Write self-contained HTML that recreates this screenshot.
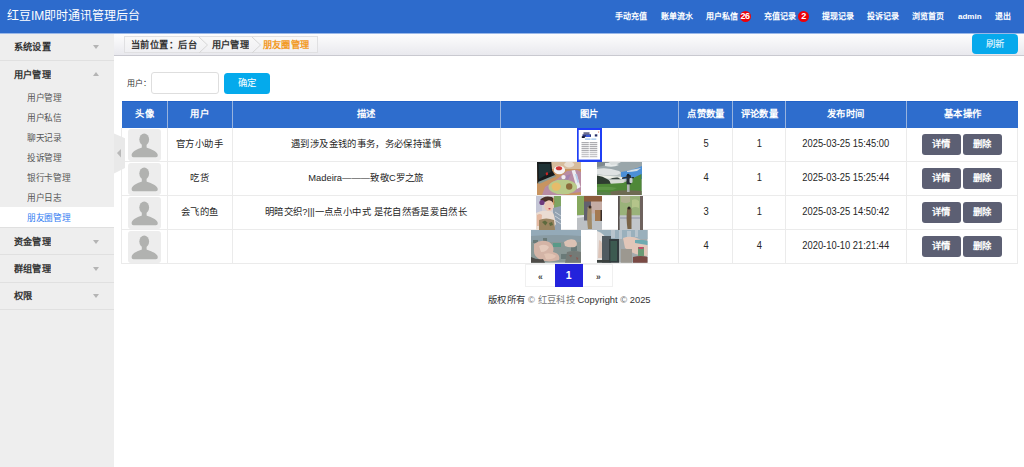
<!DOCTYPE html>
<html lang="zh-CN"><head><meta charset="utf-8">
<style>
*{margin:0;padding:0;box-sizing:border-box}
html,body{width:1024px;height:467px;overflow:hidden;background:#fff;font-family:"Liberation Sans",sans-serif;color:#333}
.a{position:absolute;white-space:nowrap}
#hdr{position:absolute;left:0;top:0;width:1024px;height:34px;background:linear-gradient(#2d6bcc 33px,#9ab8e8 33px)}
#title{left:7px;top:8.1px;font-size:12px;line-height:17px;color:#fff}
.nav{top:11px;font-size:8px;line-height:11px;color:#fff;font-weight:bold}
.badge{position:absolute;top:11px;height:11px;width:11px;border-radius:50%;background:#ee0008;color:#fff;font-size:9px;font-weight:bold;line-height:11.5px;text-align:center;letter-spacing:-0.5px}
#side{position:absolute;left:0;top:34px;width:114px;height:433px;background:#eeeeee}
.sh{position:absolute;left:0;width:114px;height:27px}
.sline{position:absolute;left:0;width:114px;height:1px;background:#e0e0e0}
.sh span{position:absolute;left:13.5px;top:0;line-height:27px;font-size:10px;font-weight:bold;color:#333;transform:scale(.92);transform-origin:0 50%}
.tri{position:absolute;left:92.8px;width:0;height:0;border-left:3.7px solid transparent;border-right:3.7px solid transparent}
.tri.dn{border-top:4.2px solid #b4b4b4;top:12px}
.tri.up{border-bottom:4.2px solid #b4b4b4;top:11.6px}
.si{position:absolute;left:0;width:114px;height:20px;line-height:21.4px;font-size:10px;color:#555}
.si span{position:absolute;left:26.5px;transform:scale(.87);transform-origin:0 50%}
.si.on{background:#fff;color:#2f7bf2;height:20px}
#crumbbar{position:absolute;left:114px;top:34px;width:910px;height:22px;background:linear-gradient(#fdfdfd,#e9e9ee);border-bottom:1px solid #c9c9d0}
#crumb{position:absolute;left:124px;top:36px;width:194px;height:16.5px;border:1px solid #e0e0e2;background:linear-gradient(#f8f8f8,#f0f0f3)}
.cr{top:37px;font-size:10px;line-height:15px;font-weight:bold;color:#333;transform:scale(.92);transform-origin:0 50%}
.chev{position:absolute;top:36.5px;width:10px;height:16px}
#refresh{position:absolute;left:972px;top:34px;width:45.5px;height:20px;border-radius:4px;background:#07a9ec;color:#fff;font-size:9.4px;line-height:19px;text-align:center}
#collapse{position:absolute;left:114px;top:133px;width:11px;height:41px;z-index:5}
.lbl{font-size:8px;color:#333}
#inp{position:absolute;left:151px;top:72px;width:68px;height:22px;border:1px solid #dedede;border-radius:3px;background:#fff}
#ok{position:absolute;left:224px;top:73px;width:46px;height:20.5px;border-radius:3.5px;background:#04aaec;color:#fff;font-size:9.4px;line-height:20px;text-align:center}
#th{position:absolute;left:122px;top:101px;width:895.5px;height:26.5px;background:#2e6dcd;border-top:1px solid #2262c8}
.hc{position:absolute;top:101px;height:26.5px;line-height:26px;color:#fff;font-weight:bold;font-size:10px;text-align:center;transform:scale(.936)}
.vs{position:absolute;top:101px;height:26.5px;width:1px;background:#98b3de}
.vl{position:absolute;top:127.5px;height:136px;width:1px;background:#ebebeb}
.hl{position:absolute;left:122px;width:896px;height:1px;background:#ebebeb}
.tc{position:absolute;height:34px;line-height:34px;font-size:10px;color:#262626;text-align:center;white-space:nowrap;transform:translateY(-0.5px) scale(.936)}
.num{transform:translateY(-1.1px) scale(.936,1.08)}
.av{position:absolute;left:127.5px;width:33px;height:32.5px;background:#ededed;border-radius:3px}
.av svg{position:absolute;left:0;top:0}
.btn{position:absolute;width:38.5px;height:20.5px;line-height:20.5px;border-radius:3px;background:#5c5f73;color:#fff;font-weight:bold;font-size:9.4px;text-align:center}
.img{position:absolute;overflow:hidden}
#pg{position:absolute;left:525px;top:264px;width:88px;height:23px;border:1px solid #f0f0f0}
#pgon{position:absolute;left:554.5px;top:264px;width:29px;height:23px;background:#2323dc;color:#fff;font-weight:bold;font-size:10.5px;line-height:23.5px;width:28.5px;text-align:center}
.pga{position:absolute;top:265.5px;line-height:23px;font-size:8.5px;font-weight:bold;color:#444}
#foot{left:488px;top:291.6px;font-size:10px;line-height:15px;color:#333;transform:scale(.936);transform-origin:0 50%}
</style></head><body>
<div id="hdr"></div>
<div id="title" class="a">红豆IM即时通讯管理后台</div>
<div class="a nav" style="left:615px">手动充值</div>
<div class="a nav" style="left:660.5px">账单流水</div>
<div class="a nav" style="left:706px">用户私信</div>
<div class="badge" style="left:739.5px">26</div>
<div class="a nav" style="left:764px">充值记录</div>
<div class="badge" style="left:798px">2</div>
<div class="a nav" style="left:821.5px">提现记录</div>
<div class="a nav" style="left:867px">投诉记录</div>
<div class="a nav" style="left:912px">浏览首页</div>
<div class="a nav" style="left:958px;font-size:8px;top:11.3px">admin</div>
<div class="a nav" style="left:994.5px">退出</div>

<!--SIDE-->
<div id="side"></div>
<div class="sh" style="top:33px"><span>系统设置</span><i class="tri dn"></i></div>
<div class="sline" style="top:60px"></div>
<div class="sh" style="top:60.7px"><span>用户管理</span><i class="tri up"></i></div>
<div class="si" style="top:87.3px"><span>用户管理</span></div>
<div class="si" style="top:107.3px"><span>用户私信</span></div>
<div class="si" style="top:127.3px"><span>聊天记录</span></div>
<div class="si" style="top:147.3px"><span>投诉管理</span></div>
<div class="si" style="top:167.3px"><span>银行卡管理</span></div>
<div class="si" style="top:187.3px"><span>用户日志</span></div>
<div class="si on" style="top:207.3px"><span>朋友圈管理</span></div>
<div class="sline" style="top:227px"></div>
<div class="sh" style="top:227.5px"><span>资金管理</span><i class="tri dn"></i></div>
<div class="sline" style="top:254px"></div>
<div class="sh" style="top:255px"><span>群组管理</span><i class="tri dn"></i></div>
<div class="sline" style="top:282px"></div>
<div class="sh" style="top:282.3px"><span>权限</span><i class="tri dn"></i></div>
<div class="sline" style="top:309px"></div>
<!--CRUMB-->
<div id="crumbbar"></div>
<div id="crumb"></div>
<div class="a cr" style="left:131px;letter-spacing:0.3px">当前位置：后台</div>
<svg class="chev" style="left:199px" width="10" height="16" viewBox="0 0 10 16"><path d="M0 0 L8.5 8 L0 16" fill="none" stroke="#d6d6d6" stroke-width="1"/></svg>
<div class="a cr" style="left:212px">用户管理</div>
<svg class="chev" style="left:252px" width="10" height="16" viewBox="0 0 10 16"><path d="M0 0 L8.5 8 L0 16" fill="none" stroke="#d6d6d6" stroke-width="1"/></svg>
<div class="a cr" style="left:263px;color:#f29a26">朋友圈管理</div>
<div id="refresh">刷新</div>

<svg id="collapse" width="11" height="41" viewBox="0 0 11 41"><path d="M0 0.5 L11 5.3 L11 35 L0 40.5 Z" fill="#e9e9e9"/><path d="M3 20 L7 16 L7 24.5 Z" fill="#b9b9b9"/></svg>

<!--SEARCH-->
<div class="a lbl" style="left:127px;top:78.2px;line-height:12px">用户：</div>
<div id="inp"></div>
<div id="ok">确定</div>

<!--TABLE-->
<div id="th"></div>
<div class="hc" style="left:122px;width:45px">头像</div>
<div class="hc" style="left:167px;width:65px">用户</div>
<div class="hc" style="left:232px;width:268px">描述</div>
<div class="hc" style="left:500px;width:178.5px">图片</div>
<div class="hc" style="left:678.5px;width:54px">点赞数量</div>
<div class="hc" style="left:732.5px;width:52.5px">评论数量</div>
<div class="hc" style="left:785px;width:121.5px">发布时间</div>
<div class="hc" style="left:906.5px;width:111px">基本操作</div>
<div class="vs" style="left:167px"></div>
<div class="vs" style="left:232px"></div>
<div class="vs" style="left:500px"></div>
<div class="vs" style="left:678px"></div>
<div class="vs" style="left:732px"></div>
<div class="vs" style="left:785px"></div>
<div class="vs" style="left:906px"></div>

<div class="vl" style="left:121px"></div>
<div class="vl" style="left:167px"></div>
<div class="vl" style="left:232px"></div>
<div class="vl" style="left:500px"></div>
<div class="vl" style="left:678px"></div>
<div class="vl" style="left:732px"></div>
<div class="vl" style="left:785px"></div>
<div class="vl" style="left:906px"></div>
<div class="vl" style="left:1017px"></div>
<div class="hl" style="top:161px"></div>
<div class="hl" style="top:195px"></div>
<div class="hl" style="top:229px"></div>
<div class="hl" style="top:263px"></div>

<!--ROWS-->
<!--R1-->
<div class="av" style="top:128.5px"><svg width="33" height="33" viewBox="0 0 33 33"><ellipse cx="16.2" cy="10.5" rx="4.9" ry="6" fill="#b1b2b0"/><path d="M13.8 14 H18.6 V19 H13.8z" fill="#b1b2b0"/><path d="M3.6 26.3 C3.6 22.8 8 20.6 12 19.2 Q14.2 18.3 16.2 18.3 Q18.2 18.3 20.4 19.2 C24.4 20.6 29.8 22.8 29.8 26.3 Q29.8 28.2 28 28.2 H5.4 Q3.6 28.2 3.6 26.3Z" fill="#b1b2b0"/></svg></div>
<div class="tc" style="left:167px;width:65px;top:127.5px">官方小助手</div>
<div class="tc" style="left:232px;width:268px;top:127.5px">遇到涉及金钱的事务，务必保持谨慎</div>
<div class="tc num" style="left:678.5px;width:54px;top:127.5px">5</div>
<div class="tc num" style="left:732.5px;width:52.5px;top:127.5px">1</div>
<div class="tc num" style="left:785px;width:121.5px;top:127.5px">2025-03-25 15:45:00</div>
<div class="btn" style="left:922px;top:134.2px">详情</div>
<div class="btn" style="left:963px;top:134.2px">删除</div>

<!--R2-->
<div class="av" style="top:162.5px"><svg width="33" height="33" viewBox="0 0 33 33"><ellipse cx="16.2" cy="10.5" rx="4.9" ry="6" fill="#b1b2b0"/><path d="M13.8 14 H18.6 V19 H13.8z" fill="#b1b2b0"/><path d="M3.6 26.3 C3.6 22.8 8 20.6 12 19.2 Q14.2 18.3 16.2 18.3 Q18.2 18.3 20.4 19.2 C24.4 20.6 29.8 22.8 29.8 26.3 Q29.8 28.2 28 28.2 H5.4 Q3.6 28.2 3.6 26.3Z" fill="#b1b2b0"/></svg></div>
<div class="tc" style="left:167px;width:65px;top:161.5px">吃货</div>
<div class="tc" style="left:232px;width:268px;top:161.5px">Madeira———致敬C罗之旅</div>
<div class="tc num" style="left:678.5px;width:54px;top:161.5px">4</div>
<div class="tc num" style="left:732.5px;width:52.5px;top:161.5px">1</div>
<div class="tc num" style="left:785px;width:121.5px;top:161.5px">2025-03-25 15:25:44</div>
<div class="btn" style="left:922px;top:168.2px">详情</div>
<div class="btn" style="left:963px;top:168.2px">删除</div>

<!--R3-->
<div class="av" style="top:196.5px"><svg width="33" height="33" viewBox="0 0 33 33"><ellipse cx="16.2" cy="10.5" rx="4.9" ry="6" fill="#b1b2b0"/><path d="M13.8 14 H18.6 V19 H13.8z" fill="#b1b2b0"/><path d="M3.6 26.3 C3.6 22.8 8 20.6 12 19.2 Q14.2 18.3 16.2 18.3 Q18.2 18.3 20.4 19.2 C24.4 20.6 29.8 22.8 29.8 26.3 Q29.8 28.2 28 28.2 H5.4 Q3.6 28.2 3.6 26.3Z" fill="#b1b2b0"/></svg></div>
<div class="tc" style="left:167px;width:65px;top:195.5px">会飞的鱼</div>
<div class="tc" style="left:232px;width:268px;top:195.5px">明暗交织?|||一点点小中式 是花自然香是爱自然长</div>
<div class="tc num" style="left:678.5px;width:54px;top:195.5px">3</div>
<div class="tc num" style="left:732.5px;width:52.5px;top:195.5px">1</div>
<div class="tc num" style="left:785px;width:121.5px;top:195.5px">2025-03-25 14:50:42</div>
<div class="btn" style="left:922px;top:202.2px">详情</div>
<div class="btn" style="left:963px;top:202.2px">删除</div>

<!--R4-->
<div class="av" style="top:230.5px"><svg width="33" height="33" viewBox="0 0 33 33"><ellipse cx="16.2" cy="10.5" rx="4.9" ry="6" fill="#b1b2b0"/><path d="M13.8 14 H18.6 V19 H13.8z" fill="#b1b2b0"/><path d="M3.6 26.3 C3.6 22.8 8 20.6 12 19.2 Q14.2 18.3 16.2 18.3 Q18.2 18.3 20.4 19.2 C24.4 20.6 29.8 22.8 29.8 26.3 Q29.8 28.2 28 28.2 H5.4 Q3.6 28.2 3.6 26.3Z" fill="#b1b2b0"/></svg></div>
<div class="tc num" style="left:678.5px;width:54px;top:229.5px">4</div>
<div class="tc num" style="left:732.5px;width:52.5px;top:229.5px">4</div>
<div class="tc num" style="left:785px;width:121.5px;top:229.5px">2020-10-10 21:21:44</div>
<div class="btn" style="left:922px;top:236.2px">详情</div>
<div class="btn" style="left:963px;top:236.2px">删除</div>

<!--IMAGES-->
<svg class="img" style="left:577px;top:127.8px" width="25" height="34" viewBox="0 0 25 34">
<rect x="0" y="0" width="25" height="34" fill="#1f3ff5"/>
<rect x="1.7" y="2" width="21.3" height="29.6" fill="#ffffff"/>
<path d="M6.5 4.2 h6 v2.2 h-6z" fill="#6a7090"/><path d="M5.5 6.3 h8.5 v2.6 h-8.5z" fill="#2a3580"/><path d="M4.8 8.2 h3 v1.8 h-3z" fill="#101830"/><path d="M9 7 h4 v2 h-4z" fill="#3a5ad8"/>
<path d="M17.8 6.3 h2.5 v2.2 h-2.5z" fill="#28306a"/><path d="M20.8 3.5 l1.6 0.2 l-0.8 1.4z" fill="#e07050"/>
<path d="M8 10.5 h5.5 v1.2 h-5.5z M14.3 10.5 h5 v1.2 h-5z" fill="#9cc4ee"/>
<g fill="#9a9a9e"><rect x="4.5" y="14.2" width="15.8" height="1"/><rect x="4.5" y="16.2" width="15.8" height="1"/><rect x="4.5" y="18.2" width="15.8" height="1"/><rect x="4.5" y="20.2" width="15.8" height="1"/><rect x="4.5" y="22.2" width="15.8" height="1"/><rect x="4.5" y="24.2" width="15.8" height="1" opacity=".7"/><rect x="4.5" y="26.2" width="15.8" height="1" opacity=".7"/><rect x="4.5" y="28.2" width="15.8" height="1" opacity=".7"/></g>
<rect x="11.8" y="13.5" width="0.8" height="16" fill="#ffffff"/>
</svg>
<svg class="img" style="left:537px;top:162px" width="44" height="33" viewBox="0 0 44 33">
<rect width="44" height="33" fill="#c89460"/>
<rect x="14" y="0" width="30" height="7" fill="#d6bc9c"/>
<path d="M5 33 L8 25 L20 17 L30 9 L40 8 L44 10 V30 L36 31 L24 33z" fill="#b88ca4"/>
<path d="M10 26 L22 18 L28 14 L34 12 L30 20 L18 28z" fill="#9a7cb0" opacity=".7"/>
<path d="M0 0 H14.3 L15.1 8.6 L18.4 13.5 L0.4 21.6 Z" fill="#161b1d"/>
<path d="M1.5 2 H13 L14 10 L2 17z" fill="#1f3336"/>
<path d="M8.6 11 L10.5 10 L11.2 12.6 L9.3 13.4z" fill="#d02424"/>
<path d="M1 20 L18 13 L19 14.5 L2 22z" fill="#8a9a94"/>
<ellipse cx="32.2" cy="2.5" rx="5" ry="3" fill="#e8ddd0"/>
<ellipse cx="22.4" cy="8" rx="5.7" ry="4.3" fill="#f4f2f2"/>
<ellipse cx="22" cy="6.3" rx="3.1" ry="2" fill="#d03838"/>
<path d="M34.6 8.6 L38 8 L43.6 25 L40 27z" fill="#ececf0"/>
<path d="M38 12 L40 12 L42 20 L40.5 21z" fill="#b8cce8"/>
<circle cx="26.5" cy="15.1" r="2.2" fill="#f2f0f2"/>
<ellipse cx="25.7" cy="24.9" rx="14.3" ry="7.4" fill="#b9ca8a"/>
<ellipse cx="19.2" cy="24.6" rx="4.6" ry="4.2" fill="#e6bc6a"/>
<circle cx="32.2" cy="24.5" r="3.2" fill="#8c6c3c"/>
</svg>
<svg class="img" style="left:597px;top:162px" width="45" height="33" viewBox="0 0 45 33">
<rect width="45" height="33" fill="#b8c0c0"/>
<path d="M0 0 H45 V9 Q30 12 18 10 Q8 8 0 10z" fill="#9aa6aa"/>
<path d="M0 0 H12 Q10 4 0 5z" fill="#808a8e"/><path d="M8 1 Q16 0 22 3 Q16 6 8 4z" fill="#e6eaea"/>
<path d="M12 0 H24 Q20 3 14 3z" fill="#d8dcdc"/>
<path d="M24 10 Q36 8 45 4 V17 H24z" fill="#4b8fd6"/>
<path d="M30 9 Q38 7 44 6 L40 9 Q34 10 30 10z" fill="#d4dde4"/>
<path d="M0 7 Q10 5 22 9 Q26 11 20 13 Q10 14 0 12z" fill="#dfe2e2"/>
<path d="M0 13 Q14 14 26 15 L26 17 Q12 17 0 16z" fill="#eceee6"/>
<path d="M0 13.5 Q6 14 10 17 L16 21 L16 23 H0z" fill="#2e3c30"/>
<path d="M12 17.5 Q16 15 21 15.5 L24 17.5z" fill="#3a4440"/>
<path d="M12 17.5 H28 L26 22.5 H14z" fill="#d8dcd6"/>
<path d="M0 22 Q14 22 26 21 L44.5 12 V33 H0z" fill="#4f8838"/>
<path d="M0 25 Q12 24 20 26 L16 28 H0z" fill="#5e9646"/>
<path d="M14 29.5 Q26 27.5 44.5 29 V33 H10z" fill="#6e6a52"/><path d="M0 30 Q8 29 14 31 V33 H0z" fill="#58804a"/>
<path d="M25 15.5 L30 14.5 L30 16 L25 17z" fill="#2a3038"/>
<rect x="29.5" y="13" width="4.5" height="9.5" rx="1" fill="#283038"/>
<circle cx="31.2" cy="13.2" r="1.4" fill="#1e2428"/>
<rect x="32.5" y="16" width="3" height="5" rx="1" fill="#c8ccd4"/>
<rect x="34.5" y="15" width="2.5" height="1.2" fill="#283038"/>
<rect x="30" y="22.5" width="2.6" height="7.5" fill="#b0b4b4"/>
</svg>
<svg class="img" style="left:536px;top:195.5px" width="25" height="34" viewBox="0 0 25 34">
<rect width="25" height="34" fill="#d6d0d4"/>
<rect x="0" y="0" width="6" height="34" fill="#c4c6d6"/>
<path d="M18 0 H25 V14 H18z" fill="#7ea462"/>
<path d="M17 12 L25 10 V34 H17z" fill="#93a2b0"/>
<path d="M19 16 L25 20 M19 20 L25 24 M19 24 L25 28" stroke="#c8d0d8" stroke-width="1"/>
<path d="M4 4 Q8 -1 16 1 Q19 3 18 8 L15 5 L7 6z" fill="#4a3028"/>
<path d="M17 1 Q19 4 18 9 L17 9z" fill="#c89058"/>
<circle cx="6" cy="6.5" r="2.6" fill="#6e3a7e"/>
<ellipse cx="13" cy="9.8" rx="4.6" ry="5.5" fill="#ecc8b4"/>
<ellipse cx="13.5" cy="12.8" rx="1.2" ry="0.7" fill="#c04050"/>
<path d="M0 17 Q6 14 12 15 Q17 15 18 19 L20 28 L16 34 H0z" fill="#eadcd2"/>
<path d="M1 19 Q4 17 6 19 L5 30 L1 30z" fill="#e4b8a0"/>
<path d="M3 24 Q10 21 18 24 L19 34 H3z" fill="#9a8460"/>
<path d="M6 26 l3 -1.5 l2.5 2 l-2 3z M13 27 l3 -1 l1 3 l-3 1z" fill="#5e6a3e"/>
</svg>
<svg class="img" style="left:577px;top:195.5px" width="25" height="34" viewBox="0 0 25 34">
<rect width="25" height="34" fill="#b8bcc0"/>
<rect x="0" y="0" width="7.5" height="19" fill="#86a85e"/>
<rect x="7" y="0" width="18" height="6" fill="#8c5c3c"/>
<rect x="7" y="5.5" width="7" height="19" fill="#62606e"/>
<rect x="14" y="5.5" width="11" height="12" fill="#c4aca4"/>
<rect x="18" y="14" width="6" height="11" fill="#a47a52"/>
<rect x="23.5" y="14" width="1.5" height="11" fill="#3a2e2a"/>
<path d="M0 19 H7 V25 H25 V34 H0z" fill="#bcc0c4"/>
<path d="M0 20 L7 19 V21 L0 22z" fill="#e8eaec"/>
<path d="M10.5 11 Q13 9.5 14.5 12 L15 33 L11 33 Q9.5 22 10.5 14z" fill="#a08a68"/>
<circle cx="13" cy="11" r="1.5" fill="#3a2a24"/>
</svg>
<svg class="img" style="left:617.5px;top:195.5px" width="25" height="34" viewBox="0 0 25 34">
<rect width="25" height="34" fill="#c0c4c8"/>
<rect x="1.5" y="0" width="20.5" height="19.5" fill="#9ab27a"/>
<path d="M3 0 H12 V6 Q8 8 3 6z" fill="#c4b0a4" opacity=".55"/>
<path d="M14 4 Q18 2 21 5 V12 Q17 10 14 12z" fill="#b4c48a"/>
<rect x="0" y="0" width="1.8" height="34" fill="#58504e"/>
<rect x="22" y="0" width="3" height="34" fill="#6e625e"/>
<rect x="1.8" y="19.5" width="20.2" height="14.5" fill="#c2c6ca"/>
<path d="M1.8 21 H22 V23 H1.8z" fill="#a8acb8"/>
<path d="M9 12.5 Q11.5 10.5 13.5 13 L13.5 33 L9.5 33 Q8 22 9 15z" fill="#7a6448"/>
<circle cx="11" cy="12" r="1.5" fill="#2e2620"/>
</svg>
<svg class="img" style="left:531px;top:230.3px" width="50" height="32.7" viewBox="0 0 50 32.7">
<rect width="50" height="32.7" fill="#8a9896"/>
<rect width="50" height="7" fill="#94aab8"/>
<path d="M0 6 Q25 4 50 6 V12 H0z" fill="#8a9ca4"/>
<g fill="#6a7a78"><rect x="2" y="10" width="5" height="3"/><rect x="12" y="8" width="4" height="4"/><rect x="40" y="16" width="6" height="5"/><rect x="30" y="24" width="8" height="5"/></g>
<path d="M22 13 h8 v4 h-8z" fill="#5a9a88"/>
<path d="M3 14 Q10 9 18 12 Q24 16 22 22 Q30 24 28 30 Q18 33 10 30 Q2 26 3 20z" fill="#d4b4a6"/>
<path d="M8 16 Q14 13 18 17 Q16 22 10 22z" fill="#e4cabc"/>
<path d="M13 24 Q20 22 25 26 Q22 30 15 29z" fill="#e2c4b4"/>
<path d="M33 12 Q38 8 44 10 Q48 14 44 17 Q38 18 34 16z" fill="#dcc2b4"/>
<path d="M0 27 Q6 30 12 29 L14 32.7 H0z" fill="#4e4c48"/>
<path d="M36 22 Q43 20 50 22 V32.7 H34z" fill="#747a76"/>
<path d="M38 25 l3 0 l-1 2.5z M45 27 l2.5 1 l-1.5 2.5z" fill="#8a5a54"/>
</svg>
<svg class="img" style="left:597px;top:230.3px" width="50.5" height="32.7" viewBox="0 0 50.5 32.7">
<rect width="50.5" height="32.7" fill="#a4aaac"/>
<rect width="50.5" height="9" fill="#9ab0bc"/>
<g fill="#b8c4cc"><rect x="14" y="0" width="4" height="8"/><rect x="22" y="0" width="3" height="9"/><rect x="30" y="1" width="4" height="8"/><rect x="38" y="0" width="3" height="7"/></g>
<path d="M0 1 Q6 3 9 8 L8 30 H0z" fill="#e6e2e0"/>
<path d="M2 10 Q6 12 7 20 L5 28 H1z" fill="#dcc4b8"/>
<path d="M26 8 Q34 5 42 9 Q48 12 50.5 16 V26 Q42 26 34 22 L28 18z" fill="#e2c6b8"/>
<path d="M38 10 Q44 9 50.5 11 V15 Q44 14 38 13z" fill="#6eaab0"/>
<rect x="5" y="6" width="9" height="26.7" fill="#505a60"/>
<rect x="12" y="9" width="10" height="23.7" fill="#323c3e"/>
<rect x="13.5" y="11" width="6.5" height="20" fill="#3c5a50"/>
<rect x="24" y="19" width="11" height="13.7" fill="#9c9890"/>
<rect x="41" y="17" width="6" height="9" fill="#6a9a74"/><rect x="41.5" y="17" width="5" height="2" fill="#c0506a"/>
<path d="M36 27 Q44 25 50.5 27 V32.7 H36z" fill="#7a4a44"/>
<path d="M0 30 H12 V32.7 H0z" fill="#3a403e"/>
</svg>


<!--PAGER-->
<div id="pg"></div>
<div class="a pga" style="left:538px">«</div>
<div id="pgon">1</div>
<div class="a pga" style="left:596px">»</div>
<div id="foot" class="a">版权所有 <span style="color:#777">©</span> <span style="color:#777">红豆科技</span> Copyright <span style="color:#666">©</span> 2025</div>
</body></html>
